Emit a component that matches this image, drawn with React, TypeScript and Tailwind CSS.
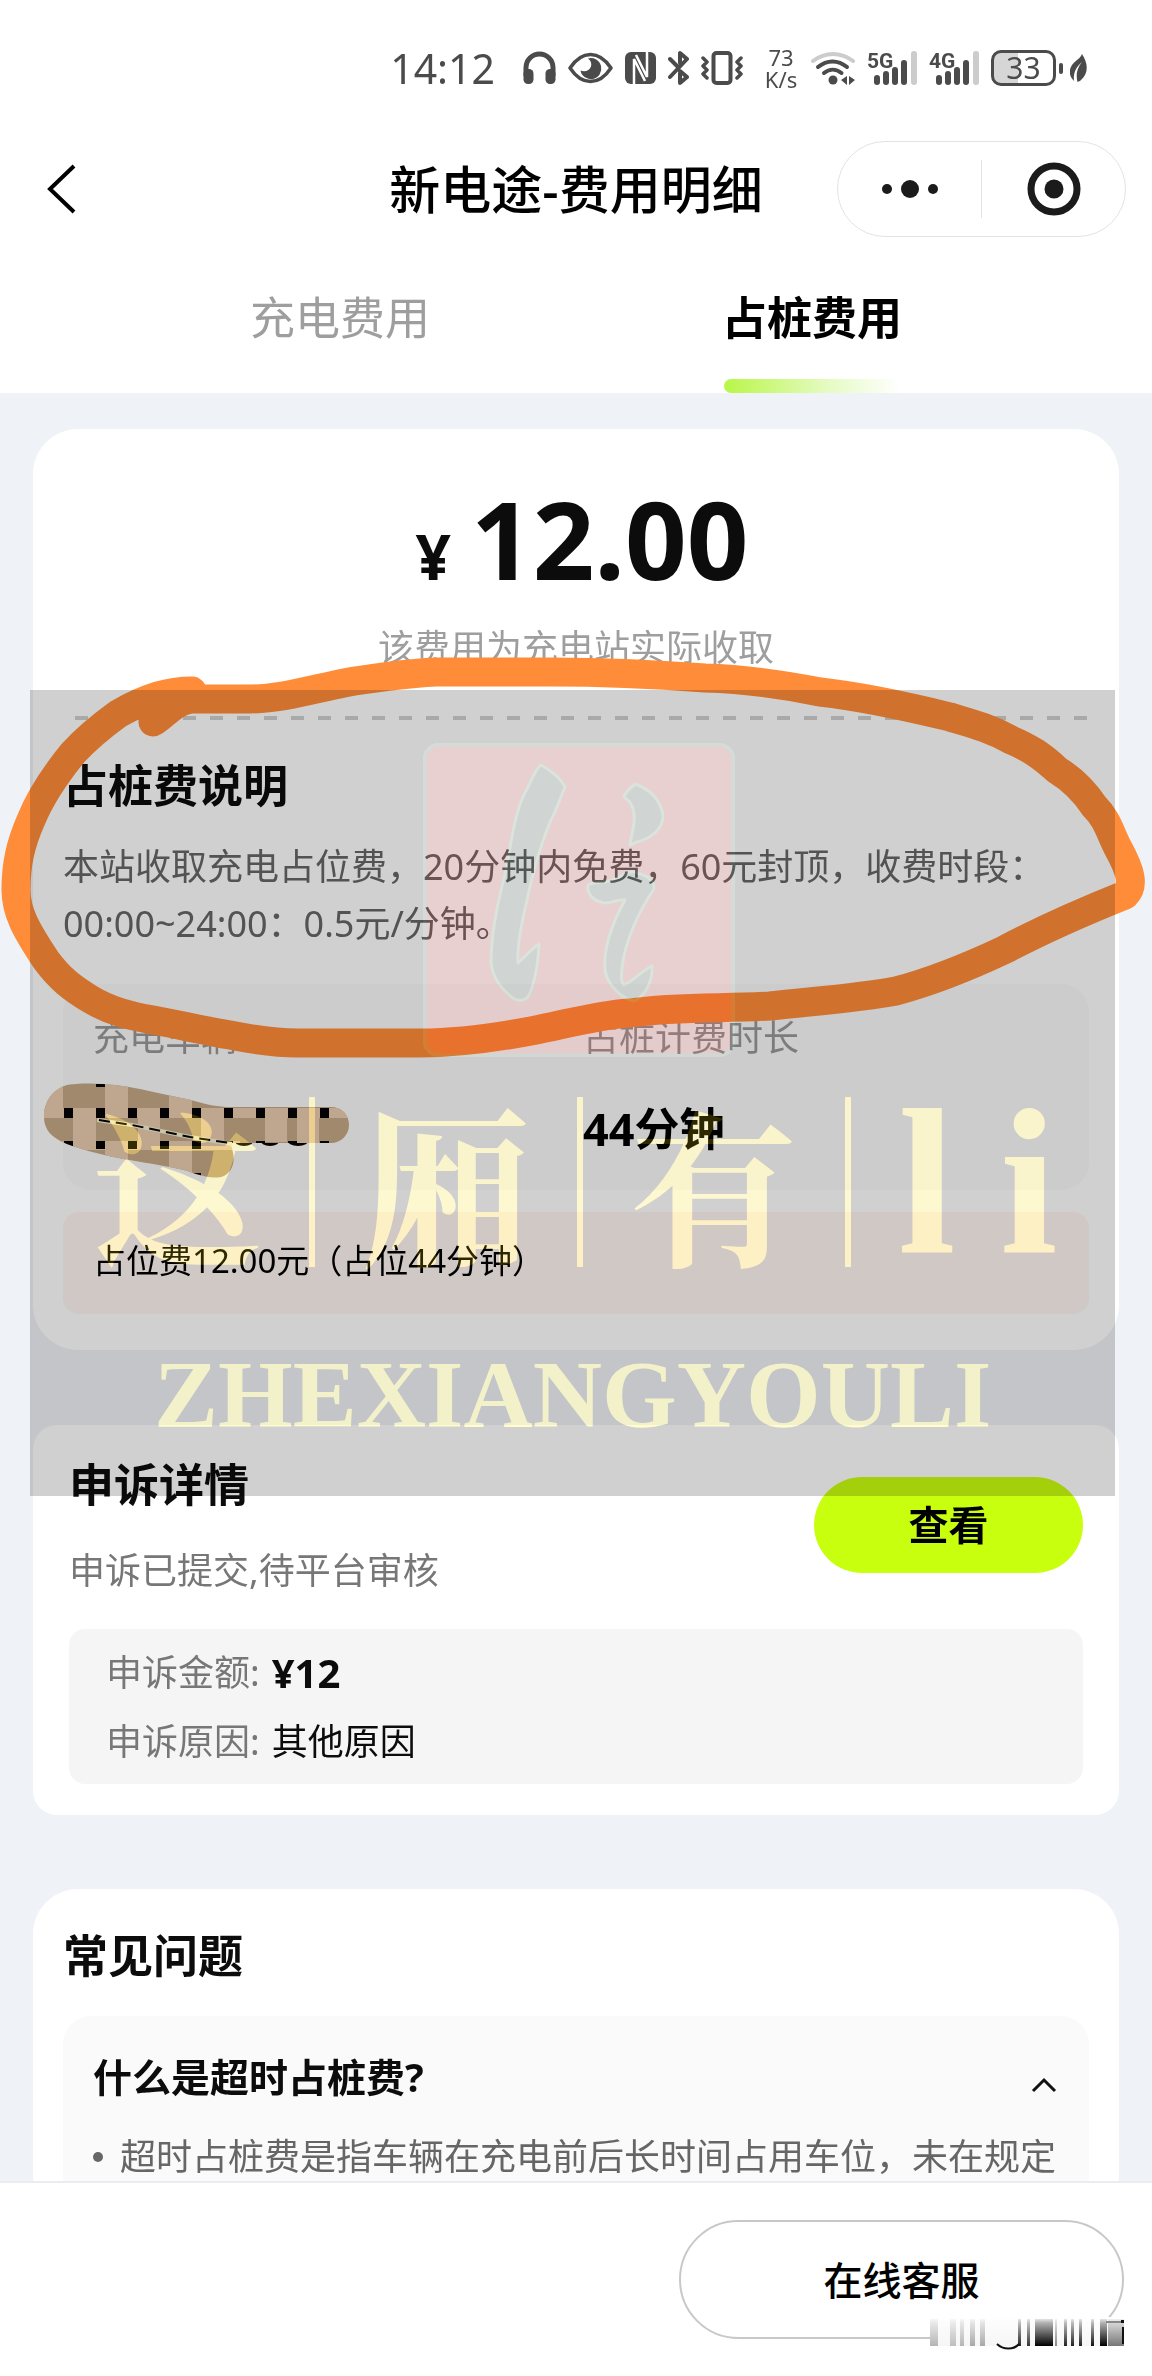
import type { ReactNode } from "react";

function StatusBar() {
  return (
    <div className="flex h-[136px] items-center justify-end gap-3 pr-[65px] text-[#4b4b4b]">
      <span className="mr-4 text-[41px] leading-[48px]">14:12</span>
      <svg width="33" height="34" viewBox="0 0 33 34" fill="none" aria-label="耳机">
        <path d="M3 25V16.500a13.500 13.500 0 0 1 27 0V25" stroke="currentColor" strokeWidth="5" />
        <rect x="0.500" y="18" width="10" height="15" rx="4.500" fill="currentColor" />
        <rect x="22.500" y="18" width="10" height="15" rx="4.500" fill="currentColor" />
      </svg>
      <svg width="45" height="32" viewBox="0 0 45 32" fill="none" aria-label="护眼模式">
        <path d="M2 16C8 7 15 2.500 22.500 2.500S37 7 43 16C37 25 30 29.500 22.500 29.500S8 25 2 16Z" stroke="currentColor" strokeWidth="3.500" strokeLinejoin="round" />
        <path d="M20 6.500a10.500 10.500 0 1 1-7.500 12c4 1.800 9 .5 10.500-4 1-3.500-.8-6.500-3-8Z" fill="currentColor" />
      </svg>
      <svg width="31" height="32" viewBox="0 0 31 32" aria-label="NFC">
        <rect width="31" height="32" rx="6" fill="currentColor" />
        <path d="M9 32V7L20 29M22 0v25L11 3" stroke="#fff" strokeWidth="2.500" fill="none" />
      </svg>
      <svg width="21" height="36" viewBox="0 0 21 36" fill="none" stroke="currentColor" strokeWidth="4" strokeLinejoin="round" strokeLinecap="round" aria-label="蓝牙">
        <path d="M2 27 19 9l-7-6v10M12 23v10l7-6-7-6M2 9l7 7" />
      </svg>
      <svg className="mr-2" width="42" height="34" viewBox="0 0 42 34" fill="none" stroke="currentColor" aria-label="振动">
        <rect x="12.500" y="2" width="17" height="30" rx="3" strokeWidth="4" />
        <path d="m2 7 4 4-4 4 4 4-4 4 4 4M40 7l-4 4 4 4-4 4 4 4-4 4" strokeWidth="3.500" strokeLinejoin="round" strokeLinecap="round" />
      </svg>
      <span className="flex w-9 flex-col items-center text-[22px] leading-[22px]">
        <span>73</span>
        <span>K/s</span>
      </span>
      <svg width="44" height="34" viewBox="0 0 44 34" fill="none" strokeLinecap="round" aria-label="无线网络">
        <path d="M2 10C14 .5 30 .5 42 10" stroke="#cccccc" strokeWidth="4" />
        <path d="M7 16c9-7.500 20-7.500 29 0" stroke="currentColor" strokeWidth="4" />
        <path d="M13 22c5.500-4.500 12-4.500 17.500 0" stroke="currentColor" strokeWidth="4" />
        <circle cx="22" cy="29" r="4.500" fill="currentColor" />
        <path d="m30 29 6-4v9ZM38 25l6 4-6 5Z" fill="currentColor" />
      </svg>
      <Signal label="5G" />
      <Signal label="4G" />
      <span className="flex items-center gap-[3px]">
        <span className="flex h-9 w-[65px] items-center justify-center rounded-[10px] border-[3px] border-[#4b4b4b] bg-[linear-gradient(90deg,#d6d6d6_40%,#ffffff_40%)] text-[30px] leading-[30px]">
          33
        </span>
        <span className="h-[11px] w-1 rounded-sm bg-[#4b4b4b]" />
        <svg className="ml-1" width="17" height="28" viewBox="0 0 17 28" aria-label="省电">
          <path d="M12 0c6 9 7 19-1 26-1 1-2 1.500-3.500 2C5 18 9 12 12 8 6 13 3 19 4 27-3 20-1 12 7 6c2-1.500 4-3.500 5-6Z" fill="currentColor" />
        </svg>
      </span>
    </div>
  );
}

function Signal({ label }: { label: string }) {
  return (
    <svg className="overflow-visible" width="50" height="34" viewBox="0 0 50 34" fill="currentColor" aria-label={label}>
      <text x="0" y="17" fontSize="21" fontWeight="700" fontFamily="Roboto, sans-serif">{label}</text>
      <rect x="7" y="24" width="6" height="10" rx="3" />
      <rect x="16" y="20" width="6" height="14" rx="3" />
      <rect x="25" y="16" width="6" height="18" rx="3" />
      <rect x="34" y="9" width="6" height="25" rx="3" />
      <rect x="44" y="0" width="6" height="34" rx="3" fill="#cccccc" />
    </svg>
  );
}

function NavBar() {
  return (
    <div className="grid h-[106px] grid-cols-[1fr_auto_1fr] items-center px-[26px]">
      <button type="button" aria-label="返回" className="ml-5 justify-self-start">
        <svg width="30" height="50" viewBox="0 0 30 50" fill="none" stroke="#000" strokeWidth="4">
          <path d="M28 2 4 25l24 23" />
        </svg>
      </button>
      <h1 className="text-[51px] font-medium leading-[60px] text-black">新电途-费用明细</h1>
      <div className="flex h-24 w-[289px] items-center justify-self-end rounded-full border border-[#e3e3e3]">
        <button type="button" aria-label="更多" className="flex flex-1 items-center justify-center gap-[9px]">
          <span className="size-[10px] rounded-full bg-[#1b1b1b]" />
          <span className="size-[18px] rounded-full bg-[#1b1b1b]" />
          <span className="size-[10px] rounded-full bg-[#1b1b1b]" />
        </button>
        <span className="h-[58px] w-px bg-[#e3e3e3]" />
        <button type="button" aria-label="关闭" className="flex flex-1 items-center justify-center">
          <svg width="54" height="54" viewBox="0 0 54 54">
            <circle cx="27" cy="27" r="23" fill="none" stroke="#1b1b1b" strokeWidth="7" />
            <circle cx="27" cy="27" r="9.500" fill="#1b1b1b" />
          </svg>
        </button>
      </div>
    </div>
  );
}

function Tabs() {
  return (
    <div role="tablist" className="grid grid-cols-2 px-[104px]">
      <button type="button" role="tab" aria-selected="false" className="h-[151px] text-[45px] leading-[60px] text-[#9e9e9e]">
        充电费用
      </button>
      <button type="button" role="tab" aria-selected="true" className="flex h-[151px] flex-col items-center justify-end text-[45px] font-bold leading-[60px] text-black">
        <span>占桩费用</span>
        <span className="mt-[31px] h-[14px] w-44 rounded-l-full bg-[linear-gradient(90deg,#b9f648,#e6fbc4_60%,#ffffff)]" />
      </button>
    </div>
  );
}

function Title({ children }: { children: ReactNode }) {
  return <h2 className="text-[45px] font-bold leading-[60px] text-[#0c0c0c]">{children}</h2>;
}

function FeeCard() {
  return (
    <section className="rounded-[45px] bg-white px-[30px] pb-9 pt-[55px]">
      <p className="flex h-[110px] items-baseline justify-center gap-5 pl-3 font-bold text-[#0c0c0c]">
        <span className="text-[62px] leading-[110px]">¥</span>
        <span className="text-[108px] leading-[110px]">12.00</span>
      </p>
      <p className="mt-[30px] text-center text-[36px] leading-[48px] text-[#9e9e9e]">该费用为充电站实际收取</p>
      <div className="ml-3 mt-11 h-1 bg-[repeating-linear-gradient(90deg,#d0d0d0_0_13px,transparent_13px_27px)]" />
      <div className="mt-9">
        <Title>占桩费说明</Title>
      </div>
      <p className="mt-[22px] text-[36px] leading-[57px] text-[#666666]">
        本站收取充电占位费，20分钟内免费，60元封顶，收费时段：
        <br />
        00:00~24:00：0.5元/分钟。
      </p>
      <dl className="mt-8 grid grid-cols-[490px_1fr] rounded-[28px] bg-[#fafafa] px-[30px] pb-[31px] pt-[30px]">
        <div>
          <dt className="text-[36px] leading-[48px] text-[#999999]">充电车辆</dt>
          <dd className="mt-[37px] h-[60px]" aria-label="已遮挡" />
        </div>
        <div>
          <dt className="text-[36px] leading-[48px] text-[#999999]">占桩计费时长</dt>
          <dd className="mt-[37px] text-[45px] font-bold leading-[60px] text-black">44分钟</dd>
        </div>
      </dl>
      <p className="mt-[22px] rounded-2xl bg-[#fff5f2] px-[30px] pb-[29px] pt-[25px] text-[33px] leading-[48px] text-black">
        占位费12.00元（占位44分钟）
      </p>
    </section>
  );
}

function AppealCard() {
  return (
    <section className="mt-[75px] rounded-[24px] bg-white px-9 pb-[31px] pt-[30px]">
      <div className="flex items-center justify-between">
        <div>
          <Title>申诉详情</Title>
          <p className="mt-8 text-[36px] leading-[48px] text-[#777777]">申诉已提交,待平台审核</p>
        </div>
        <button type="button" className="h-24 w-[269px] rounded-full bg-[#c8ff0e] text-[40px] font-bold leading-[56px] text-black">
          查看
        </button>
      </div>
      <dl className="mt-[34px] rounded-2xl bg-[#f5f5f5] px-[37px] pb-2 pt-[9px] text-[36px] leading-[69px]">
        <div className="flex gap-3">
          <dt className="text-[#777777]">申诉金额:</dt>
          <dd className="text-[40px] font-bold text-[#0c0c0c]">¥12</dd>
        </div>
        <div className="flex gap-3">
          <dt className="text-[#777777]">申诉原因:</dt>
          <dd className="text-[#0c0c0c]">其他原因</dd>
        </div>
      </dl>
    </section>
  );
}

function FaqCard() {
  return (
    <section className="mt-[74px] rounded-t-[45px] bg-white px-[30px] pb-[30px] pt-[37px]">
      <Title>常见问题</Title>
      <div className="mt-[30px] rounded-[28px] bg-[#fafafa] px-[30px] pb-8 pt-[33px]">
        <button type="button" aria-expanded="true" className="flex w-full items-center justify-between pr-[2px] text-[39px] font-bold leading-[56px] text-[#0c0c0c]">
          什么是超时占桩费?
          <svg className="mt-4" width="26" height="16" viewBox="0 0 26 16" fill="none" stroke="#111" strokeWidth="3">
            <path d="M2 14 13 3l11 11" />
          </svg>
        </button>
        <ul className="mt-6 text-[36px] leading-[56px] text-[#666666]">
          <li className="flex items-center gap-[17px] whitespace-nowrap">
            <span className="size-[10px] shrink-0 rounded-full bg-[#666666]" />
            超时占桩费是指车辆在充电前后长时间占用车位，未在规定
          </li>
        </ul>
      </div>
    </section>
  );
}

const DARK_COLUMNS = [0, 32, 64, 96, 128, 160, 192, 224, 256];

function Markup() {
  return (
    <svg className="pointer-events-none absolute left-0 top-[650px] w-full" viewBox="0 650 1152 540" aria-hidden="true">
      <defs>
        <clipPath id="redaction">
          <path d="M44 1117c0-20 14-33 32-33 40-3 75 8 115 16 18 5 26 7 40 7h100c11 0 18 8 18 18s-8 18-18 18H229c8 12 6 30-8 34-14 3-30-6-42-8-36-8-72-10-112-25-15-6-23-14-23-27Z" />
        </clipPath>
      </defs>
      <g fill="#050505">
        <ellipse cx="244" cy="1140" rx="10" ry="6" />
        <ellipse cx="270" cy="1140" rx="10" ry="6" />
        <ellipse cx="298" cy="1140" rx="11" ry="6" />
      </g>
      <g clipPath="url(#redaction)">
        <rect x="40" y="1080" width="320" height="100" fill="#c4a985" />
        <rect x="40" y="1108" width="320" height="10" fill="#e9cdaf" />
        <rect x="40" y="1141" width="200" height="9" fill="#e9cdaf" />
        <g fill="#e9cdaf">
          <rect x="40" y="1084" width="23" height="34" />
          <rect x="105" y="1080" width="23" height="38" />
          <rect x="169" y="1080" width="23" height="38" />
          <rect x="73" y="1118" width="23" height="24" />
          <rect x="105" y="1150" width="23" height="30" />
          <rect x="138" y="1118" width="22" height="24" />
          <rect x="169" y="1150" width="23" height="30" />
          <rect x="201" y="1118" width="23" height="24" />
          <rect x="265" y="1118" width="22" height="24" />
          <rect x="297" y="1108" width="22" height="35" />
        </g>
        {DARK_COLUMNS.map((x) => (
          <g key={x} fill="#050505">
            <rect x={64 + x} y="1108" width="9" height="10" />
            <rect x={64 + x} y="1141" width="9" height={x < 160 ? 8 : 3} />
          </g>
        ))}
        <rect x="96" y="1084" width="9" height="3" fill="#050505" />
        <rect x="192" y="1173" width="9" height="3" fill="#050505" />
      </g>
      <path d="M97 1120 132 1125 190 1137 232 1144" fill="none" stroke="#f6efd0" strokeWidth="4" />
      <path d="M99 1120 132 1125 190 1137 230 1143" fill="none" stroke="#050505" strokeWidth="2" strokeDasharray="11 6" />
      <path
        d="M192 691C178 691 168 693 158 696C142 701 130 707 118 714C100 727 85 740 73 753C55 775 40 798 31 820C20 845 16 865 16 890C16 912 26 930 46 960C60 979 72 988 90 999C110 1011 130 1016 153 1020C180 1025 205 1031 230 1035C255 1040 275 1043 298 1043H420C460 1043 500 1037 536 1030C570 1023 600 1015 629 1013C680 1006 725 1009 770 1006C815 1001 860 998 896 991C930 982 970 966 1004 950C1040 931 1085 911 1125 895C1135 885 1130 870 1118 848C1110 833 1108 820 1094 806C1082 788 1070 778 1057 770C1042 756 1030 748 1011 740C990 728 970 723 950 717C905 706 865 697 820 692C780 684 740 679 705 678C650 674 600 672 552 672H436C410 673 365 679 344 683C310 690 280 699 249 699H190C172 703 166 714 153 722"
        fill="none"
        stroke="#ff8c38"
        strokeWidth="29"
        strokeLinecap="round"
        strokeLinejoin="round"
      />
    </svg>
  );
}

function Seal() {
  return (
    <svg className="absolute left-[393px] top-[53px] mix-blend-plus-lighter" width="312" height="314" viewBox="0 0 312 314" aria-hidden="true">
      <rect x="1.500" y="1.500" width="309" height="311" rx="15" fill="#180000" stroke="#040c08" strokeWidth="4" />
      <g fill="#000402" stroke="#0a140d" strokeWidth="3" strokeLinejoin="round">
        <path d="M118 22 C127 27 137 34 142 44 C137 55 134 66 127 79 C117 104 109 132 104 157 C98 182 94 207 95 220 C101 215 107 207 116 201 C115 222 111 241 106 252 C103 258 95 259 90 255 C79 247 69 234 68 219 C68 197 74 162 82 131 C89 98 91 68 105 44 C109 36 112 27 118 22 Z" />
        <path d="M212 41 C226 46 237 56 240 72 C240 86 229 95 214 99 L207 102 C209 87 215 74 208 61 C205 55 202 57 201 53 C204 48 207 45 212 41 Z" />
        <path d="M165 142 C171 138 181 141 189 137 C201 133 206 126 214 130 C222 132 232 136 231 146 C218 165 202 196 199 225 C198 233 198 240 201 242 C210 238 219 228 229 223 C230 241 220 254 211 258 C199 256 184 242 182 227 C180 202 191 177 202 157 C194 155 186 163 178 159 C169 157 164 150 165 142 Z" />
      </g>
    </svg>
  );
}

function Watermark() {
  return (
    <div className="pointer-events-none absolute left-[30px] right-[37px] top-[690px] h-[806px]" aria-hidden="true">
      <div className="absolute inset-0 bg-black/[0.185]" />
      <Seal />
      <div className="absolute left-16 top-[402px] flex items-center gap-[47px] whitespace-nowrap font-['Noto_Serif_CJK_SC','Noto_Sans_CJK_SC',serif] text-[168px] font-bold leading-[180px] text-[#2e2800] mix-blend-plus-lighter">
        <span>这</span>
        <span className="h-[170px] w-[6px] bg-[#2e2800]" />
        <span>厢</span>
        <span className="h-[170px] w-[6px] bg-[#2e2800]" />
        <span>有</span>
        <span className="h-[170px] w-[6px] bg-[#2e2800]" />
        <span className="flex gap-11 font-['Liberation_Serif',serif] text-[208px]">
          <span>l</span>
          <span>i</span>
        </span>
      </div>
      <div className="absolute left-[124px] top-[657px] whitespace-nowrap font-['Liberation_Serif',serif] text-[96px] font-bold leading-[96px] text-[#302c00] mix-blend-plus-lighter">
        ZHEXIANGYOULI
      </div>
    </div>
  );
}

const STREAKS = [
  [0, 8, "#b5b5b5"],
  [20, 6, "#bdbdbd"],
  [30, 4, "#b5b5b5"],
  [40, 5, "#a8a8a8"],
  [50, 5, "#a8a8a8"],
  [88, 3, "#222222"],
  [97, 3, "#333333"],
  [105, 18, "#000000"],
  [125, 2, "#888888"],
  [134, 3, "#222222"],
  [141, 3, "#222222"],
  [149, 3, "#222222"],
  [161, 3, "#111111"],
  [170, 7, "#000000"],
  [178, 16, "#777777"],
] as const;

function Smudge() {
  return (
    <svg className="pointer-events-none absolute -bottom-3 right-0" width="194" height="34" viewBox="0 0 194 34" aria-hidden="true">
      <defs>
        <linearGradient id="fade" x1="0" y1="0" x2="0" y2="1">
          <stop offset="0" stopColor="#fff" stopOpacity="1" />
          <stop offset="0.200" stopColor="#fff" stopOpacity="0.700" />
          <stop offset="1" stopColor="#fff" stopOpacity="0" />
        </linearGradient>
      </defs>
      <rect width="190" height="29" fill="#f6f6f6" />
      {STREAKS.map(([x, w, fill]) => (
        <rect key={x} x={x} y="2" width={w} height="27" fill={fill} />
      ))}
      <rect width="194" height="29" fill="url(#fade)" />
      <rect x="176" y="4" width="18" height="2" fill="#888" />
      <path d="M191 3h3v3h-3zM192 10h2v17h-2z" fill="#111" />
      <path d="M67 27c6 6 17 6 22 0" fill="none" stroke="#111" strokeWidth="2" />
    </svg>
  );
}

export default function App() {
  return (
    <div className="relative flex h-screen flex-col overflow-hidden bg-white font-['Noto_Sans','Noto_Sans_CJK_SC',sans-serif]">
      <header className="shrink-0">
        <StatusBar />
        <NavBar />
        <Tabs />
      </header>
      <main className="min-h-0 flex-1 overflow-hidden bg-[#eff2f7] px-[33px] pt-9">
        <FeeCard />
        <AppealCard />
        <FaqCard />
      </main>
      <Markup />
      <Watermark />
      <footer className="flex shrink-0 justify-end border-t-2 border-[#e9ecf0] bg-white pb-[37px] pl-7 pr-7 pt-[37px]">
        <div className="relative">
          <button type="button" className="h-[119px] w-[445px] rounded-full border-2 border-[#c8c8c8] bg-white text-[39px] font-medium leading-[56px] text-black">
            在线客服
          </button>
          <Smudge />
        </div>
      </footer>
    </div>
  );
}
